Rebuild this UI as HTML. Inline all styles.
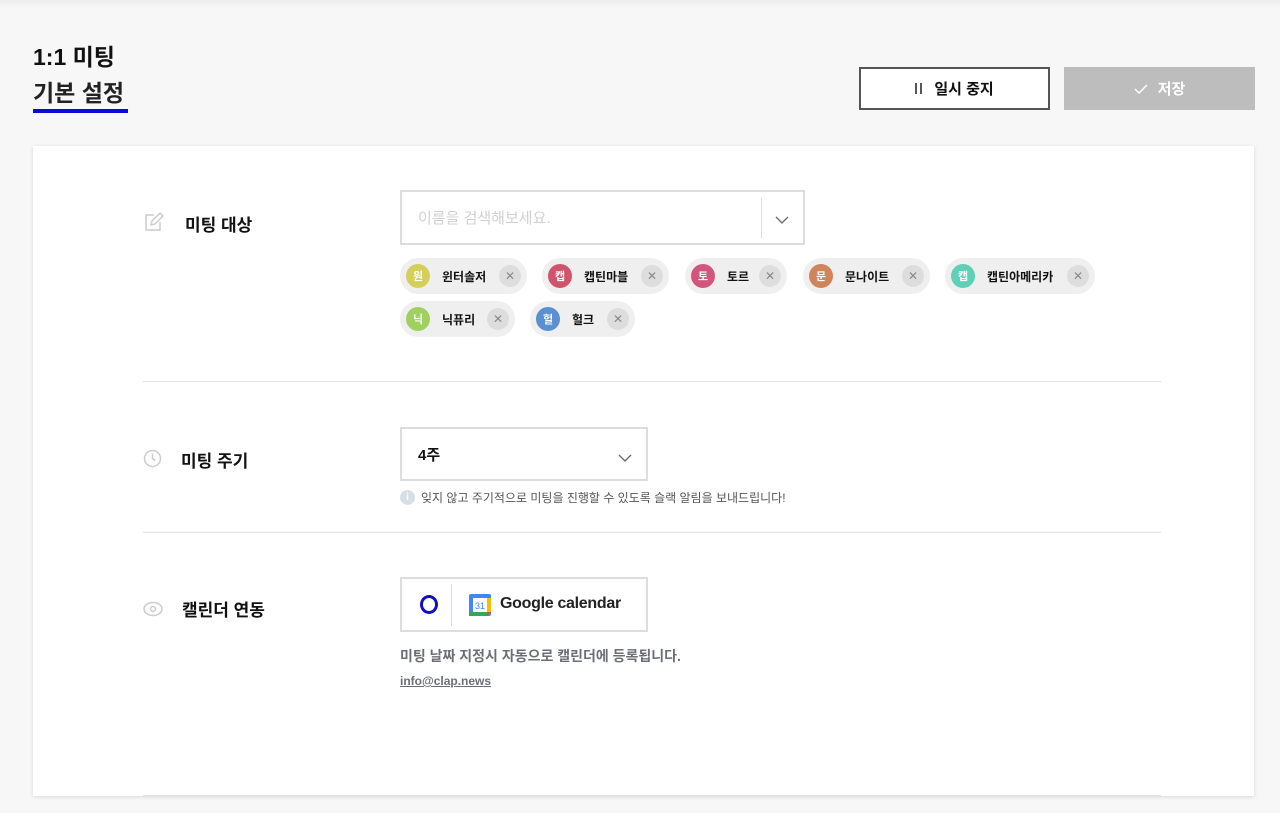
<!DOCTYPE html>
<html><head><meta charset="utf-8"><style>
*{box-sizing:border-box;margin:0;padding:0}
body{width:1280px;height:813px;background:#f7f7f7;font-family:"Liberation Sans","Noto Sans CJK KR",sans-serif;position:relative;overflow:hidden;color:#111}
.a{position:absolute}
.chip{position:absolute;height:36px;border-radius:18px;background:#efefef;display:flex;align-items:center;padding-left:6px;font-size:12px;font-weight:700}
.av{width:24px;height:24px;border-radius:50%;color:#fff;font-size:11px;display:flex;align-items:center;justify-content:center;margin-right:12px}
.x{width:22px;height:22px;border-radius:50%;background:#ddd;color:#888;font-size:12px;font-weight:400;display:flex;align-items:center;justify-content:center;position:absolute;right:6px;top:7px}
.lbl{font-size:17px;font-weight:700}
.hr{position:absolute;left:143px;width:1018px;height:1px;background:#e2e2e2}
</style></head><body>
<div class="a" style="left:0;top:0;width:1280px;height:8px;background:linear-gradient(#ececec,#f7f7f7)"></div>
<div class="a" style="left:33px;top:38px;font-size:23px;font-weight:700">1:1 미팅</div>
<div class="a" style="left:33px;top:74px;font-size:23px;font-weight:700;color:#222">기본 설정</div>
<div class="a" style="left:33px;top:109px;width:95px;height:4px;background:#0a0ad8"></div>
<div class="a" style="left:859px;top:67px;width:191px;height:43px;border:2px solid #555;background:#fff;display:flex;align-items:center;justify-content:center;font-size:15px;font-weight:700"><span style="display:inline-block;width:2px;height:11px;background:#555;margin-right:3px"></span><span style="display:inline-block;width:2px;height:11px;background:#555;margin-right:12px"></span>일시 중지</div>
<div class="a" style="left:1064px;top:67px;width:191px;height:43px;background:#bdbdbd;display:flex;align-items:center;justify-content:center;font-size:15px;font-weight:700;color:#fff"><svg width="14" height="10" viewBox="0 0 14 10" fill="none" stroke="#fff" stroke-width="1.4" style="margin-right:10px"><path d="M1 5l4 4 8-8"/></svg>저장</div>

<div class="a" style="left:33px;top:146px;width:1221px;height:650px;background:#fff;box-shadow:0 1px 4px rgba(0,0,0,.12)"></div>

<svg class="a" style="left:143px;top:211px" width="22" height="22" viewBox="0 0 22 22" fill="none" stroke="#ccc" stroke-width="1.5"><path d="M11 4H3v15h14v-8"/><path d="M17 2l3 3-8 8-4 1 1-4z"/></svg>
<div class="a lbl" style="left:185px;top:211px">미팅 대상</div>
<div class="a" style="left:400px;top:190px;width:405px;height:55px;border:2px solid #ddd"></div>
<div class="a" style="left:418px;top:207px;font-size:15px;color:#d0d0d0">이름을 검색해보세요.</div>
<div class="a" style="left:761px;top:198px;width:1px;height:40px;background:#ddd"></div>
<svg class="a" style="left:775px;top:215px" width="14" height="10" viewBox="0 0 14 10" fill="none" stroke="#666" stroke-width="1.3"><path d="M1 2l6 6 6-6"/></svg>

<div class="chip" style="left:400px;top:258px;width:127px"><div class="av" style="background:#d4cf5a">원</div>윈터솔저<div class="x">✕</div></div>
<div class="chip" style="left:542px;top:258px;width:127px"><div class="av" style="background:#d0546a">캡</div>캡틴마블<div class="x">✕</div></div>
<div class="chip" style="left:685px;top:258px;width:102px"><div class="av" style="background:#d0567d">토</div>토르<div class="x">✕</div></div>
<div class="chip" style="left:803px;top:258px;width:127px"><div class="av" style="background:#d0845a">문</div>문나이트<div class="x">✕</div></div>
<div class="chip" style="left:945px;top:258px;width:150px"><div class="av" style="background:#5fd0b8">캡</div>캡틴아메리카<div class="x">✕</div></div>
<div class="chip" style="left:400px;top:301px;width:115px"><div class="av" style="background:#9fd060">닉</div>닉퓨리<div class="x">✕</div></div>
<div class="chip" style="left:530px;top:301px;width:105px"><div class="av" style="background:#5a8fd0">헐</div>헐크<div class="x">✕</div></div>

<div class="hr" style="top:381px"></div>

<svg class="a" style="left:143px;top:449px" width="19" height="19" viewBox="0 0 19 19" fill="none" stroke="#ccc" stroke-width="1.5"><circle cx="9.5" cy="9.5" r="8"/><path d="M9.5 4.5v5l3 2"/></svg>
<div class="a lbl" style="left:181px;top:447px">미팅 주기</div>
<div class="a" style="left:400px;top:427px;width:248px;height:54px;border:2px solid #ddd"></div>
<div class="a" style="left:418px;top:444px;font-size:15px;font-weight:700">4주</div>
<svg class="a" style="left:618px;top:453px" width="14" height="10" viewBox="0 0 14 10" fill="none" stroke="#666" stroke-width="1.3"><path d="M1 2l6 6 6-6"/></svg>
<div class="a" style="left:400px;top:490px;width:15px;height:15px;border-radius:50%;background:#d6dfe8;color:#fff;font-size:10px;font-weight:700;text-align:center;line-height:15px">i</div>
<div class="a" style="left:421px;top:489px;font-size:12px;color:#555">잊지 않고 주기적으로 미팅을 진행할 수 있도록 슬랙 알림을 보내드립니다!</div>

<div class="hr" style="top:532px"></div>

<svg class="a" style="left:143px;top:599px" width="20" height="20" viewBox="0 0 20 20" fill="none" stroke="#ccc" stroke-width="1.5"><ellipse cx="10" cy="10" rx="9" ry="6.5"/><circle cx="10" cy="10" r="2.5"/></svg>
<div class="a lbl" style="left:182px;top:596px">캘린더 연동</div>
<div class="a" style="left:400px;top:577px;width:248px;height:55px;border:2px solid #ddd"></div>
<div class="a" style="left:420px;top:595px;width:18px;height:19px;border:3px solid #1010c0;border-radius:50%"></div>
<div class="a" style="left:451px;top:584px;width:1px;height:42px;background:#ddd"></div>
<svg class="a" style="left:468px;top:593px" width="24" height="24" viewBox="0 0 24 24"><rect x="1" y="1" width="22" height="22" rx="2" fill="#4285f4"/><rect x="5" y="5" width="14" height="14" fill="#fff"/><rect x="1" y="19" width="18" height="4" fill="#34a853"/><path d="M19 19h4l-4 4z" fill="#ea4335"/><rect x="19" y="5" width="4" height="14" fill="#fbbc04"/><text x="12" y="16" font-size="9" text-anchor="middle" fill="#4285f4" font-family="Liberation Sans">31</text></svg>
<div class="a" style="left:500px;top:595px;font-size:16px;font-weight:700;color:#222;letter-spacing:-0.3px">Google calendar</div>
<div class="a" style="left:400px;top:646px;font-size:14px;font-weight:700;color:#6b6f75">미팅 날짜 지정시 자동으로 캘린더에 등록됩니다.</div>
<div class="a" style="left:400px;top:674px;font-size:12px;font-weight:700;color:#6b6f75;text-decoration:underline">info@clap.news</div>
<div class="hr" style="top:795px"></div>
</body></html>
